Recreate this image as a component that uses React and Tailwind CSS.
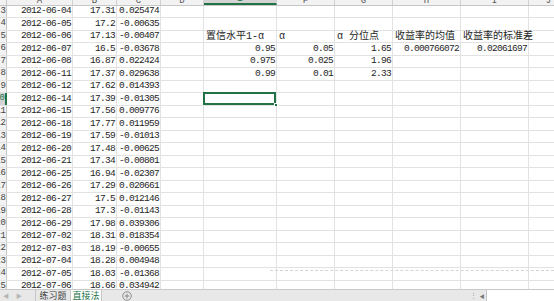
import clsx from "clsx";

const colW = [
  "w-[66px]",
  "w-[44px]",
  "w-[44px]",
  "w-[43px]",
  "w-[73px]",
  "w-[58px]",
  "w-[58px]",
  "w-[68px]",
  "w-[68px]",
  "w-[40px]",
];
const letters = ["A", "B", "C", "D", "E", "F", "G", "H", "I", "J"];

const data = [
  ["3", "2012-06-04", "17.31", "0.025474"],
  ["4", "2012-06-05", "17.2", "-0.00635"],
  ["5", "2012-06-06", "17.13", "-0.00407", "", "head"],
  ["6", "2012-06-07", "16.5", "-0.03678", "", "0.95", "0.05", "1.65", "0.000766072", "0.02061697"],
  ["7", "2012-06-08", "16.87", "0.022424", "", "0.975", "0.025", "1.96"],
  ["8", "2012-06-11", "17.37", "0.029638", "", "0.99", "0.01", "2.33"],
  ["9", "2012-06-12", "17.62", "0.014393"],
  ["10", "2012-06-14", "17.39", "-0.01305"],
  ["11", "2012-06-15", "17.56", "0.009776"],
  ["12", "2012-06-18", "17.77", "0.011959"],
  ["13", "2012-06-19", "17.59", "-0.01013"],
  ["14", "2012-06-20", "17.48", "-0.00625"],
  ["15", "2012-06-21", "17.34", "-0.00801"],
  ["16", "2012-06-25", "16.94", "-0.02307"],
  ["17", "2012-06-26", "17.29", "0.020661"],
  ["18", "2012-06-27", "17.5", "0.012146"],
  ["19", "2012-06-28", "17.3", "-0.01143"],
  ["20", "2012-06-29", "17.98", "0.039306"],
  ["21", "2012-07-02", "18.31", "0.018354"],
  ["22", "2012-07-03", "18.19", "-0.00655"],
  ["23", "2012-07-04", "18.28", "0.004948"],
  ["24", "2012-07-05", "18.03", "-0.01368"],
  ["25", "2012-07-06", "18.66", "0.034942"],
];

const heads = ["置信水平1-α", "α", "α 分位点", "收益率的均值", "收益率的标准差"];

function Cell({ i, children, left, selected }) {
  return (
    <div
      className={clsx(
        colW[i],
        "relative shrink-0 h-full border-r border-[#e2e2e2] flex items-center whitespace-nowrap",
        left ? "justify-start pl-[2px]" : "justify-end pr-[1px]"
      )}
    >
      {children}
      {selected && (
        <>
          <div className="absolute -left-[1px] -top-[1px] right-0 bottom-0 border-2 border-[#217346]" />
          <div className="absolute -right-[2px] -bottom-[2px] w-[4px] h-[4px] bg-[#217346] border border-white" />
        </>
      )}
    </div>
  );
}

function Row({ r }) {
  const sel = r[0] === "10";
  const isHead = r[5] === "head";
  return (
    <div className="flex h-[12.5px] shrink-0 border-b border-[#e2e2e2]">
      <div
        className={clsx(
          "w-[7px] shrink-0 h-full overflow-hidden flex items-center justify-end text-[9px] tracking-normal",
          sel
            ? "bg-[#d3d3d3] border-r-2 border-[#217346] text-[#217346]"
            : "bg-[#f2f2f2] border-r border-[#c6c6c6] text-[#444]"
        )}
      >
        {r[0]}
      </div>
      {colW.map((_, i) => {
        if (isHead && i >= 4 && i <= 8) {
          return (
            <Cell key={i} i={i} left>
              <span className="text-[10px] tracking-normal">{heads[i - 4]}</span>
            </Cell>
          );
        }
        let v = "";
        if (i < 3) v = r[i + 1];
        else if (i >= 4 && i <= 8) v = r[i + 1] || "";
        return (
          <Cell key={i} i={i} selected={sel && i === 4}>
            {v}
          </Cell>
        );
      })}
    </div>
  );
}

export default function App() {
  return (
    <div className="w-[554px] h-[301px] overflow-hidden bg-white flex flex-col font-['Liberation_Mono','Noto_Sans_CJK_SC',monospace] text-[9.5px] tracking-[-0.7px] text-[#1e1e1e]">
      <div className="relative h-[289px] shrink-0 overflow-hidden">
        <div className="flex h-[5.5px] shrink-0 bg-[#f2f2f2] border-b border-[#c6c6c6] overflow-hidden">
          <div className="w-[7px] shrink-0 border-r border-[#c6c6c6]" />
          {letters.map((l, i) => (
            <div
              key={l}
              className={clsx(
                colW[i],
                "shrink-0 h-full border-r border-[#d0d0d0] flex items-end justify-center overflow-hidden text-[9px] leading-none text-[#555] tracking-normal",
                i === 4 && "bg-[#d3d3d3] border-b-2 border-b-[#217346] text-[#217346]"
              )}
            >
              <span className="-mb-[1px]">{l}</span>
            </div>
          ))}
        </div>
        {data.map((r) => (
          <Row key={r[0]} r={r} />
        ))}
        <div className="absolute left-[270px] right-0 top-[270px] border-t border-dashed border-[#d4d4d4]" />
      </div>
      <div className="h-[12px] shrink-0 flex items-stretch bg-[#e8e8e8] border-t border-[#c8c8c8] font-['Noto_Sans_CJK_SC',sans-serif] text-[9px] leading-none tracking-normal">
        <div className="w-[35px] flex items-center gap-[7px] pl-[3px] text-[6px] text-[#b5b5b5]">
          <span>◀</span>
          <span>▶</span>
        </div>
        <div className="w-[35px] flex items-center justify-center border-l border-[#c6c6c6] text-[#444]">
          练习题
        </div>
        <div className="w-[32px] flex items-center justify-center bg-white border-x border-[#c6c6c6] text-[#217346]">
          直接法
        </div>
        <div className="w-[50px] flex items-center justify-center">
          <svg width="10" height="10" viewBox="0 0 10 10">
            <circle cx="5" cy="5" r="4.3" fill="none" stroke="#777" strokeWidth="0.8" />
            <path d="M5 2.6v4.8M2.6 5h4.8" stroke="#777" strokeWidth="0.8" />
          </svg>
        </div>
        <div className="flex-1" />
        <div className="w-[10px] flex items-center justify-center text-[7px] text-[#999]">⋮</div>
        <div className="w-[8px] flex items-center justify-center text-[5px] text-[#777]">◀</div>
        <div className="w-[68px] bg-white border-l border-[#c6c6c6]" />
      </div>
    </div>
  );
}
